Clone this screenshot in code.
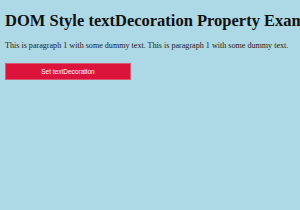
export default function App() {
  return (
    <div className="w-[300px] h-[210px] overflow-hidden bg-[#add8e6] px-[5px] pt-[11px] text-black" style={{ fontFamily: '"Liberation Serif", serif' }}>
      <h1 className="text-[16.5px] leading-[20px] font-bold whitespace-nowrap text-[#111]">DOM Style textDecoration Property Example</h1>
      <p className="mt-[10px] text-[8.1px] leading-[10px] whitespace-nowrap text-[#222]">
        This is paragraph 1 with some dummy text. This is paragraph 1 with some dummy text.
      </p>
      <button className="mt-[12px] w-[126px] h-[17px] bg-[#dc143c] text-white text-[6.5px] border border-[#c8c8c8]/40 block" style={{ fontFamily: '"Liberation Sans", sans-serif' }}>
        Set textDecoration
      </button>
    </div>
  );
}
